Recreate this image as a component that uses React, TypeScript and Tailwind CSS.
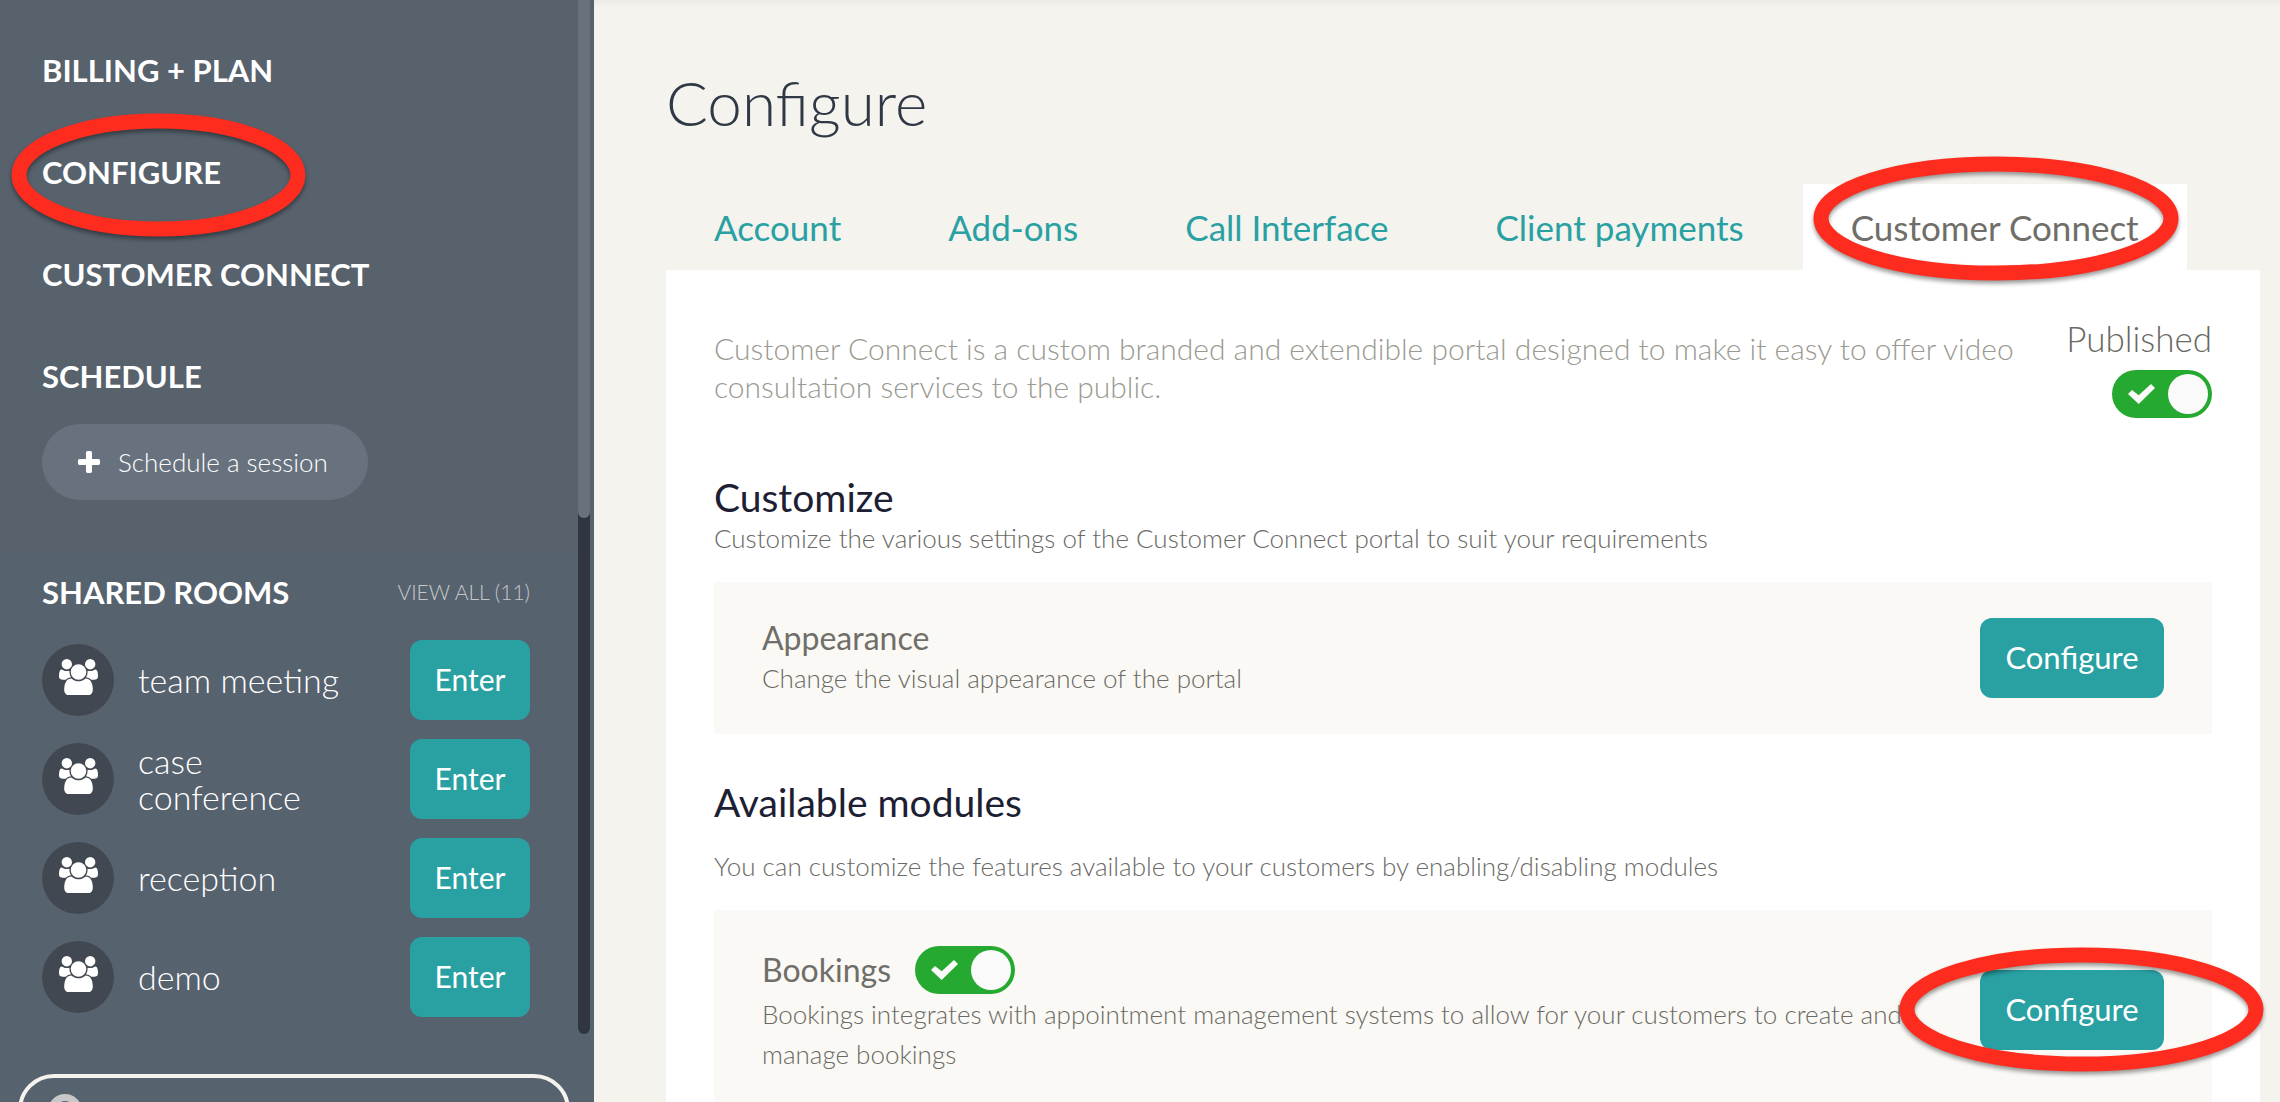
import type { ReactNode } from "react";

const navItems = ["Billing + Plan", "Configure", "Customer Connect", "Schedule"];
const rooms = ["team meeting", "case conference", "reception", "demo"];
const tabs = ["Account", "Add-ons", "Call Interface", "Client payments", "Customer Connect"];

function Highlight({ className }: { className: string }) {
  return (
    <svg
      aria-hidden="true"
      className={`pointer-events-none absolute z-10 overflow-visible drop-shadow-[0_3px_2px_rgba(0,0,0,0.4)] ${className}`}
    >
      <ellipse cx="50%" cy="50%" rx="50%" ry="50%" fill="none" stroke="#fd2c1e" strokeWidth="15" />
    </svg>
  );
}

function GroupIcon() {
  return (
    <svg aria-hidden="true" viewBox="0 0 1920 1792" className="mb-[6px] w-[39px]" fill="#fff">
      <path d="M593 896q-162 5-265 128h-134q-82 0-138-40.5t-56-118.5q0-353 124-353 6 0 43.5 21t97.5 42.5 119 21.5q67 0 133-23-5 37-5 66 0 139 81 256zm1071 637q0 120-73 189.5t-194 69.5h-874q-121 0-194-69.5t-73-189.5q0-53 3.5-103.5t14-109 26.5-108.5 43-97.5 62-81 85.5-53.5 111.5-20q10 0 43 21.5t73 48 107 48 135 21.5 135-21.5 107-48 73-48 43-21.5q61 0 111.5 20t85.5 53.5 62 81 43 97.5 26.5 108.5 14 109 3.5 103.5zm-1024-1277q0 106-75 181t-181 75-181-75-75-181 75-181 181-75 181 75 75 181zm704 384q0 159-112.5 271.5t-271.5 112.5-271.5-112.5-112.5-271.5 112.5-271.5 271.5-112.5 271.5 112.5 112.5 271.5zm576 225q0 78-56 118.5t-138 40.5h-134q-103-123-265-128 81-117 81-256 0-29-5-66 66 23 133 23 59 0 119-21.5t97.5-42.5 43.5-21q124 0 124 353zm-128-609q0 106-75 181t-181 75-181-75-75-181 75-181 181-75 181 75 75 181z" />
    </svg>
  );
}

function PlusIcon() {
  return (
    <svg aria-hidden="true" viewBox="192 128 1408 1408" className="size-[22px]" fill="#fff">
      <path d="M1600 736v192q0 40-28 68t-68 28h-416v416q0 40-28 68t-68 28h-192q-40 0-68-28t-28-68v-416h-416q-40 0-68-28t-28-68v-192q0-40 28-68t68-28h416v-416q0-40 28-68t68-28h192q40 0 68 28t28 68v416h416q40 0 68 28t28 68z" />
    </svg>
  );
}

function Toggle({ label }: { label: string }) {
  return (
    <label className="relative flex h-12 w-[100px] shrink-0 cursor-pointer items-center justify-between rounded-full bg-[#26a930] pr-1 pl-4">
      <input type="checkbox" defaultChecked aria-label={label} className="sr-only" />
      <svg aria-hidden="true" viewBox="0 0 27 20" className="h-5 w-[27px]" fill="#fafafa">
        <path d="M0 10 4 6l6.700 5.300L23 0l4 4-16.300 16z" />
      </svg>
      <span className="size-10 rounded-full bg-[#fafafa]" />
    </label>
  );
}

function ActionButton({ children }: { children: ReactNode }) {
  return (
    <button type="button" className="h-20 w-[184px] shrink-0 rounded-xl bg-[#29a1a3] pb-0.5 text-[31px] text-white">
      {children}
    </button>
  );
}

function Sidebar() {
  return (
    <aside className="flex w-[594px] shrink-0 flex-col bg-[#57626f]">
      <div className="flex h-[1034px] shrink-0">
        <div className="min-w-0 flex-1">
          <nav className="bg-[#57626d] px-[42px] pt-[19px] pb-[51px]">
            <ul>
              {navItems.map((item) => (
                <li key={item} className="relative flex h-[102px] items-center">
                  <a href="#" className="text-[31px] font-bold text-white uppercase">
                    {item}
                  </a>
                  {item === "Configure" && <Highlight className="-left-[23px] top-0 h-[108px] w-[279px]" />}
                </li>
              ))}
            </ul>
            <button
              type="button"
              className="-mt-[3px] flex h-[76px] items-center gap-[18px] rounded-full bg-[#67727e] pr-10 pl-9 text-[26px] font-light text-white"
            >
              <PlusIcon />
              Schedule a session
            </button>
          </nav>
          <section className="pt-5 pr-12 pl-[42px]">
            <div className="flex h-[42px] items-center justify-between">
              <h2 className="text-[31px] font-bold text-white uppercase">Shared rooms</h2>
              <a href="#" className="text-[21px] font-light text-[#c5c7ca]">
                VIEW ALL (11)
              </a>
            </div>
            <ul className="mt-[27px] flex flex-col gap-[19px]">
              {rooms.map((room) => (
                <li key={room} className="flex h-20 items-center">
                  <span className="flex size-[72px] shrink-0 items-center justify-center rounded-full bg-[#424852]">
                    <GroupIcon />
                  </span>
                  <span className="ml-6 w-[220px] text-[34px] leading-9 font-light text-white">{room}</span>
                  <button
                    type="button"
                    className="ml-auto h-20 w-[120px] rounded-xl bg-[#29a1a3] pb-0.5 text-[30px] text-white"
                  >
                    Enter
                  </button>
                </li>
              ))}
            </ul>
          </section>
        </div>
        <div className="mr-1 w-3 shrink-0 rounded-b-full bg-[#2f3640]">
          <div className="h-[518px] rounded-b-full bg-[#67727c]" />
        </div>
      </div>
      <label className="mx-[18px] mt-10 mr-6 flex h-[74px] shrink-0 items-start gap-4 rounded-[36px] border-4 border-[#f4f3ee] px-[26px] pt-4">
        <span className="size-[34px] shrink-0 rounded-full border-[7px] border-[#c8c8c8]" />
        <input type="search" aria-label="Search" className="min-w-0 flex-1 bg-transparent text-[26px] text-white outline-none" />
      </label>
    </aside>
  );
}

function ModuleCard({
  title,
  text,
  toggle,
  highlight,
}: {
  title: string;
  text: string;
  toggle?: boolean;
  highlight?: boolean;
}) {
  return (
    <div className="flex items-center justify-between bg-[#faf9f5] px-12 py-9">
      <div className="min-w-0 flex-1">
        <div className="flex items-center gap-6">
          <h3 className="text-[32px] leading-10 text-[#6f6e69]">{title}</h3>
          {toggle && <Toggle label={title} />}
        </div>
        <p className="max-w-[1150px] text-[26px] leading-10 font-light text-[#6a6964]">{text}</p>
      </div>
      <div className="relative">
        <ActionButton>Configure</ActionButton>
        {highlight && <Highlight className="-left-[73px] -top-[15px] h-[109px] w-[349px]" />}
      </div>
    </div>
  );
}

export default function App() {
  return (
    <div className="flex h-screen overflow-hidden bg-[#f4f3ee] font-['Lato',sans-serif]">
      <Sidebar />
      <main className="min-w-0 flex-1 pr-5 pl-[72px] shadow-[inset_0_6px_6px_-4px_rgba(0,0,0,0.05)]">
        <h1 className="pt-[60px] text-[62px] leading-[84px] font-light text-[#2f3844]">Configure</h1>
        <nav className="mt-10 flex gap-[11px]">
          {tabs.map((tab) => {
            const active = tab === "Customer Connect";
            return (
              <a
                key={tab}
                href="#"
                aria-current={active ? "page" : undefined}
                className={
                  active
                    ? "relative flex h-[86px] items-center bg-white px-12 text-[35px] text-[#6f6e69]"
                    : "flex h-[86px] items-center px-12 text-[35px] text-[#29a1a3]"
                }
              >
                {tab}
                {active && <Highlight className="left-[18px] -top-[20px] h-[109px] w-[350px]" />}
              </a>
            );
          })}
        </nav>
        <div className="bg-white px-12 pt-12 pb-12">
          <div className="flex justify-between gap-12">
            <p className="mt-[11px] max-w-[1320px] text-[30px] leading-[38px] font-light text-[#9b9a91]">
              Customer Connect is a custom branded and extendible portal designed to make it easy to offer video
              consultation services to the public.
            </p>
            <div className="flex flex-col items-end">
              <span className="mb-3 text-[35px] leading-10 font-light text-[#6a6964]">Published</span>
              <Toggle label="Published" />
            </div>
          </div>
          <h2 className="mt-14 text-[39px] leading-[46px] text-[#1d2033]">Customize</h2>
          <p className="mb-[26px] text-[26px] leading-9 font-light text-[#6a6964]">
            Customize the various settings of the Customer Connect portal to suit your requirements
          </p>
          <ModuleCard title="Appearance" text="Change the visual appearance of the portal" />
          <h2 className="mt-[45px] text-[39px] leading-[46px] text-[#1d2033]">Available modules</h2>
          <p className="mt-[21px] mb-6 text-[26px] leading-10 font-light text-[#6a6964]">
            You can customize the features available to your customers by enabling/disabling modules
          </p>
          <ModuleCard
            title="Bookings"
            text="Bookings integrates with appointment management systems to allow for your customers to create and manage bookings"
            toggle
            highlight
          />
        </div>
      </main>
    </div>
  );
}
